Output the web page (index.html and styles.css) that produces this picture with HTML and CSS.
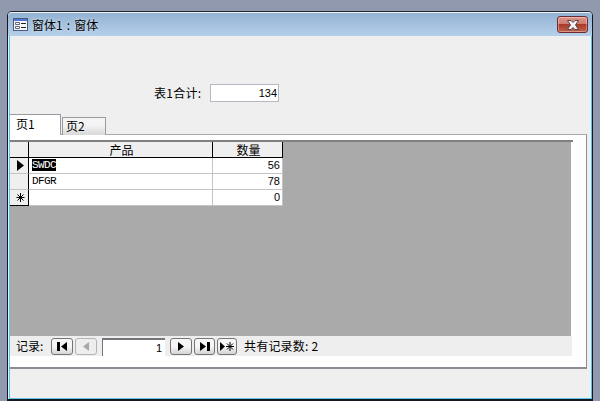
FILE: index.html
```html
<!DOCTYPE html>
<html lang="zh">
<head>
<meta charset="utf-8">
<title>窗体1 : 窗体</title>
<link rel="stylesheet" href="styles.css">
</head>
<body>
<div class="window">
  <div class="titlebar">
    <svg class="app-icon" width="15" height="13" viewBox="0 0 15 13">
      <rect x="0.5" y="0.5" width="14" height="12" fill="#f4f6fa" stroke="#4a5a80"/>
      <rect x="1" y="1" width="13" height="2" fill="#4f78d0"/>
      <path d="M2.5 4.5h4v2h-4zM2.5 8.5h4v2h-4z" fill="#fff" stroke="#667" stroke-width="1"/>
      <path d="M8 5.5h5M8 9.5h5" stroke="#222" stroke-width="1"/>
    </svg>
    <span class="title-text">窗体1 : 窗体</span>
    <button class="close" type="button" aria-label="关闭">
      <svg width="16" height="10" viewBox="0 0 16 10">
        <path d="M2.5 .5h3.5l2 2 2-2h3.5l-3 4.500 3 4.500h-3.500L8 7.500 6 9.500H2.500l3-4.500z" fill="#f2f2f4" stroke="#55484c" stroke-width="1"/>
      </svg>
    </button>
  </div>
  <div class="client">
    <div class="form-header">
      <label class="total-label">表1合计:</label>
      <div class="total-box">134</div>
    </div>
    <div class="tabs">
      <div class="tab active">页1</div>
      <div class="tab">页2</div>
    </div>
    <div class="pane">
      <div class="sub">
        <div class="sheet-area">
          <div class="sheet">
            <div class="cell sel head"></div>
            <div class="cell head">产品</div>
            <div class="cell head last">数量</div>

            <div class="cell sel">
              <svg width="7" height="11" viewBox="0 0 7 11"><path d="M0 0l7 5.500L0 11z" fill="#000"/></svg>
            </div>
            <div class="cell text"><span class="picked">SWDC</span></div>
            <div class="cell num">56</div>

            <div class="cell sel"></div>
            <div class="cell text">DFGR</div>
            <div class="cell num">78</div>

            <div class="cell sel star">
              <svg width="9" height="9" viewBox="0 0 9 9"><path d="M4.500 0v9M0.500 4.500h8M1.500 1.500l6 6M7.500 1.500l-6 6" stroke="#000" stroke-width="1" fill="none"/></svg>
            </div>
            <div class="cell text"></div>
            <div class="cell num">0</div>
          </div>
        </div>
        <div class="nav">
          <span class="nav-label">记录:</span>
          <button class="nb first" type="button">
            <svg width="10" height="9" viewBox="0 0 10 9"><path d="M0 0h3v9H0zM10 0v9L4 4.500z" fill="#000"/></svg>
          </button>
          <button class="nb off" type="button">
            <svg width="6" height="9" viewBox="0 0 6 9"><path d="M6 0v9L0 4.500z" fill="#a8a8a8"/></svg>
          </button>
          <div class="nav-input">1</div>
          <button class="nb next" type="button">
            <svg width="6" height="9" viewBox="0 0 6 9"><path d="M0 0v9l6-4.500z" fill="#000"/></svg>
          </button>
          <button class="nb last-btn" type="button">
            <svg width="10" height="9" viewBox="0 0 10 9"><path d="M0 0v9l6-4.500zM7 0h3v9H7z" fill="#000"/></svg>
          </button>
          <button class="nb new" type="button">
            <svg width="14" height="9" viewBox="0 0 14 9"><path d="M0 0v9l5-4.500z" fill="#000"/><path d="M10 0v9M6 4.500h8M7 1.500l6 6M13 1.500l-6 6" stroke="#000" fill="none"/></svg>
          </button>
          <span class="nav-count">共有记录数: 2</span>
        </div>
      </div>
    </div>
    <div class="form-footer"></div>
  </div>
</div>
</body>
</html>
```
FILE: styles.css
```css
* { box-sizing: border-box; }
html, body { margin: 0; height: 401px; overflow: hidden; }
body {
  background: #9199ae;
  padding: 11px 7px 0 7px;
  font: 12px/16px "Noto Sans CJK SC", "Liberation Sans", sans-serif;
  color: #000;
}
.window {
  height: 390px;
  border: 1px solid #14181f;
  border-bottom-width: 2px;
  border-radius: 5px 5px 0 0;
  border-top-color: #20242c;
  background: #5cc4e6;
  padding: 0 1px 1px 2px;
  display: flex;
  flex-direction: column;
  box-shadow: inset 1px 0 0 #dff1f9;
}
.titlebar {
  height: 24px;
  margin: 0 -1px 0 -2px;
  padding: 0 4px 0 5px;
  background: linear-gradient(#93b2d2, #b6d0ea);
  border-top: 1px solid #f0f4f8;
  border-radius: 4px 4px 0 0;
  display: flex;
  align-items: center;
  gap: 4px;
}
.app-icon { flex: none; }
.title-text {
  flex: 1;
  font-size: 12px;
  word-spacing: 1.500px;
  color: #000;
  text-shadow: 0 0 3px #e4eef8;
}
.close {
  width: 31px;
  height: 17px;
  padding: 0;
  border: 1px solid #6e2a30;
  border-radius: 3px;
  background: linear-gradient(#dc9488 0, #cf7a6e 48%, #a83a28 50%, #c0604c 100%);
  box-shadow: inset 0 0 0 1px rgba(255,255,255,.35);
  display: flex;
  align-items: center;
  justify-content: center;
}
.client {
  flex: 1;
  background: #efefef;
  display: flex;
  flex-direction: column;
  min-height: 0;
}
.form-header {
  height: 78px;
  padding: 48px 0 0 144px;
  display: flex;
  align-items: flex-start;
}
.total-label { width: 56px; line-height: 18px; letter-spacing: .3px; }
.total-box {
  width: 69px;
  height: 18px;
  border: 1px solid #b4b8c0;
  background: #fff;
  text-align: right;
  padding-right: 1px;
  font: 11px/16px "Liberation Sans", sans-serif;
}
.tabs { display: flex; height: 20px; align-items: flex-start; }
.tab {
  width: 44px;
  height: 18px;
  margin: 3px 0 0 1px;
  border: 1px solid #9a9aa2;
  border-bottom: 0;
  background: linear-gradient(#f4f4f4 40%, #d8d8d8);
  padding-left: 3px;
  line-height: 15px;
  position: relative;
}
.tab.active {
  width: 51px;
  height: 21px;
  margin: 0;
  border-left: 0;
  background: #fff;
  padding-left: 6px;
  line-height: 18px;
}
.pane {
  height: 235px;
  width: 577px;
  background: #fff;
  border-top: 1px solid #a8a8ae;
  border-right: 1px solid #8c8c94;
  border-bottom: 2px solid #8c8c94;
  padding-top: 5px;
}
.sub {
  width: 563px;
  border-top: 2px solid #808084;
}
.sheet-area {
  height: 194px;
  width: 561px;
  background: #aaa;
}
.sheet {
  width: 273px;
  display: grid;
  grid-template-columns: 19px 184px 70px;
  grid-template-rows: 16px 16px 16px 16px;
  background: #fff;
}
.cell {
  border-bottom: 1px solid #c4c4c4;
  border-right: 1px solid #c4c4c4;
  font: 11px/15px "Liberation Mono", monospace;
  letter-spacing: -.6px;
  padding: 0 1px 0 3px;
}
.head {
  background: #efefef;
  border-bottom: 1px solid #000;
  border-right: 1px solid #000;
  text-align: center;
  letter-spacing: 0;
  font: 12px/15px "Noto Sans CJK SC", sans-serif;
}
.sel {
  background: #efefef;
  border-right: 1px solid #000;
  display: flex;
  align-items: center;
  justify-content: center;
}
.star { border-bottom: 1px solid #000; }
.num {
  text-align: right;
  padding-right: 2px;
  letter-spacing: 0;
  font-family: "Liberation Sans", sans-serif;
}
.picked { background: #000; color: #fff; }
.nav {
  height: 20px;
  width: 562px;
  background: #eee;
  display: flex;
  align-items: flex-start;
  padding: 2px 0 0 6px;
}
.nav-label { width: 35px; }
.nb {
  width: 22px;
  height: 17px;
  padding: 0;
  border: 1px solid #74747a;
  border-radius: 3px;
  background: linear-gradient(#f6f6f6 50%, #d4d4d4);
  display: flex;
  align-items: center;
  justify-content: center;
}
.off { margin-left: 2px; border-color: #b4b4b8; background: #eee; }
.nav-input {
  width: 63px;
  height: 18px;
  margin: 0 5px;
  background: #fff;
  border-top: 2px solid #74747a;
  border-left: 1px solid #74747a;
  text-align: right;
  padding-right: 3px;
  font: 11px/16px "Liberation Sans", sans-serif;
}
.last-btn { width: 21px; margin-left: 2px; }
.new { width: 20px; margin-left: 2px; }
.nav-count { margin-left: 7px; letter-spacing: .2px; }
.form-footer { flex: 1; }
```
